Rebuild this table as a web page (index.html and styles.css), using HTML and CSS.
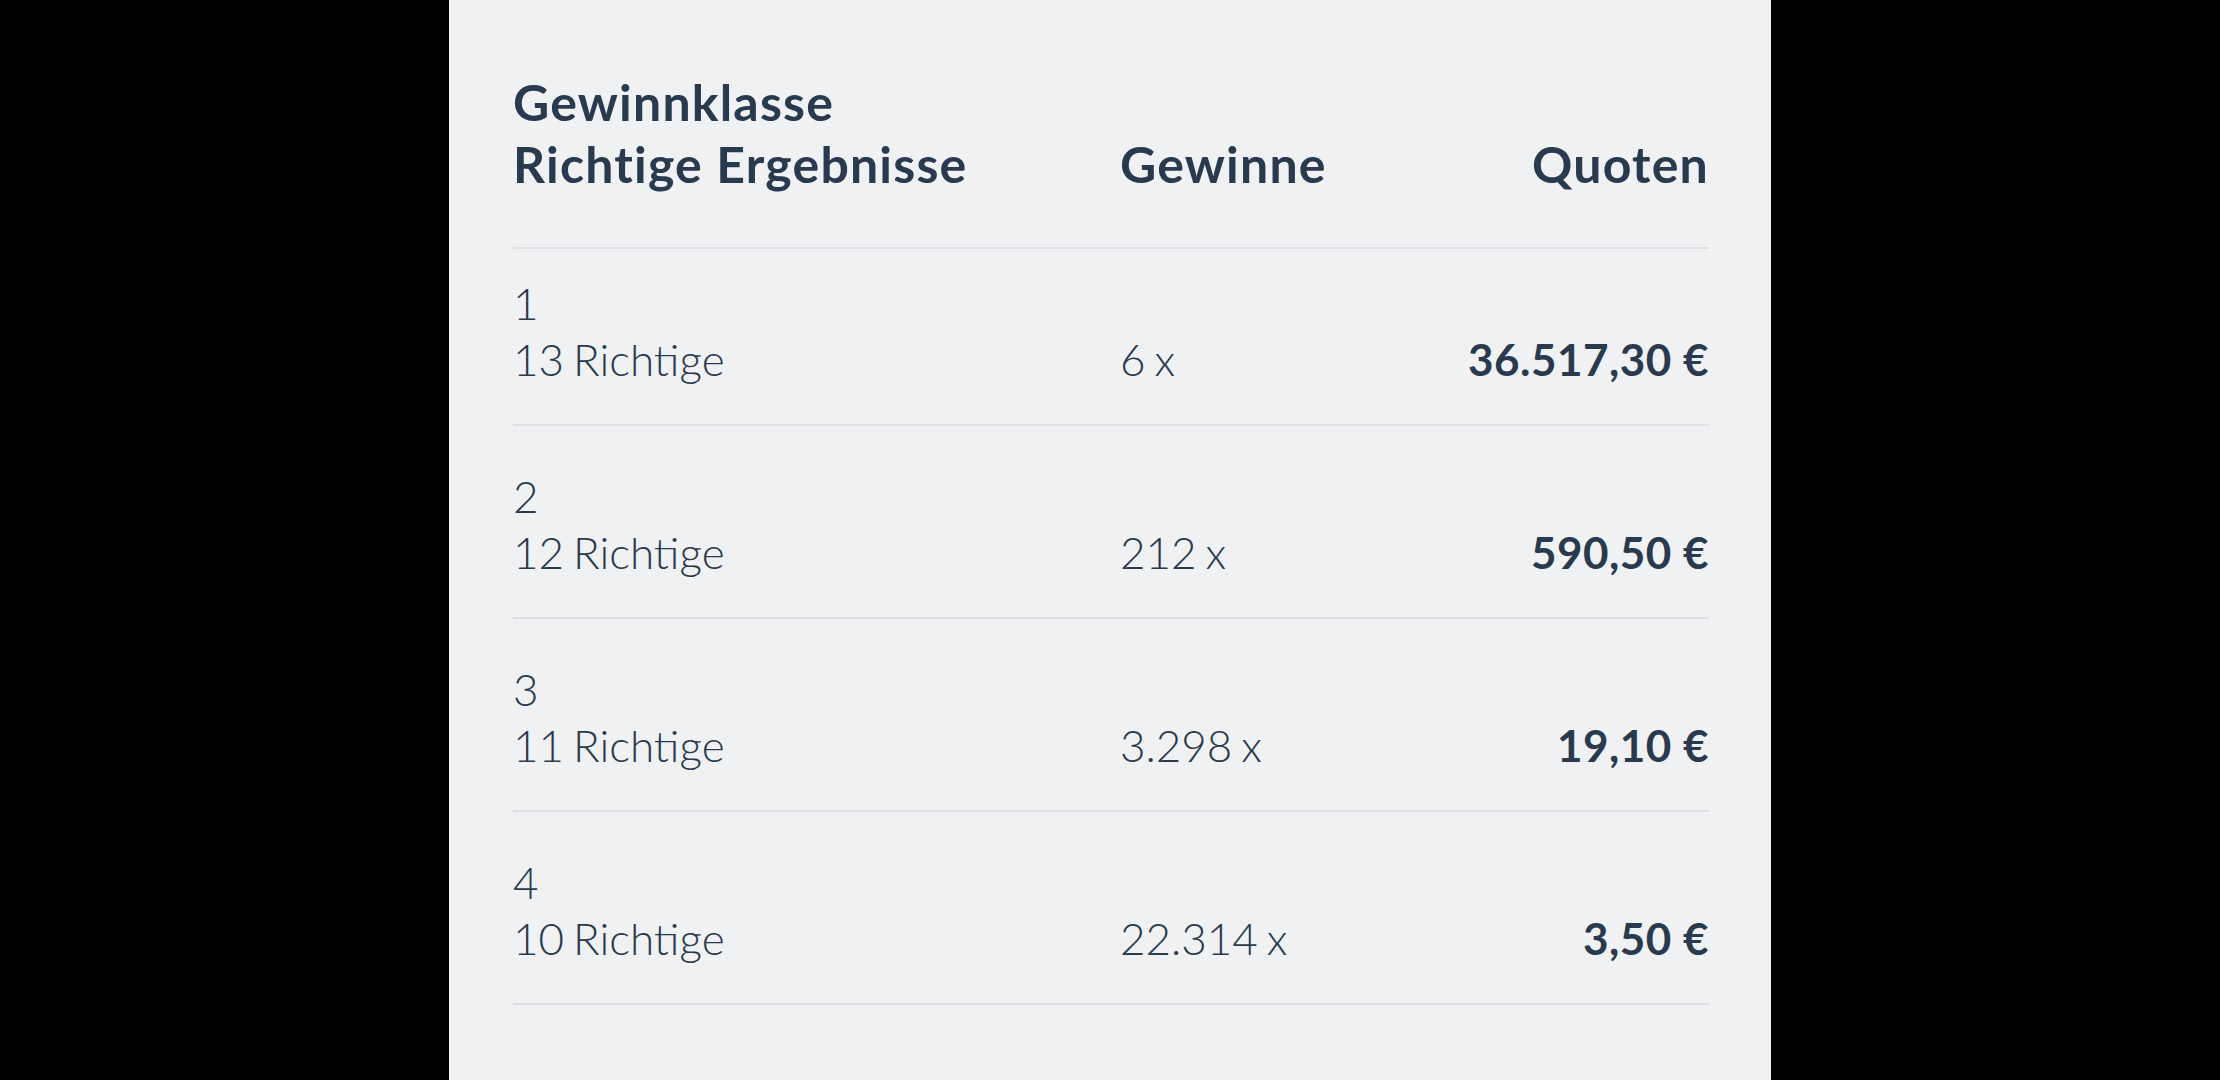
FILE: index.html
```html
<!DOCTYPE html>
<html lang="de">
<head>
<meta charset="utf-8">
<title>Quoten</title>
<link rel="stylesheet" href="styles.css">
</head>
<body>
<div class="panel">
  <div class="row head">
    <div class="col">Gewinnklasse<br>Richtige Ergebnisse</div>
    <div class="col">Gewinne</div>
    <div class="col right">Quoten</div>
  </div>
  <div class="row first">
    <div class="col">1<br>13 Richtige</div>
    <div class="col">6 x</div>
    <div class="col right sum">36.517,30 €</div>
  </div>
  <div class="row">
    <div class="col">2<br>12 Richtige</div>
    <div class="col">212 x</div>
    <div class="col right sum">590,50 €</div>
  </div>
  <div class="row">
    <div class="col">3<br>11 Richtige</div>
    <div class="col">3.298 x</div>
    <div class="col right sum">19,10 €</div>
  </div>
  <div class="row">
    <div class="col">4<br>10 Richtige</div>
    <div class="col">22.314 x</div>
    <div class="col right sum">3,50 €</div>
  </div>
</div>
</body>
</html>
```

FILE: styles.css
```css
body{
margin:0;
background:#000;
}
.panel{
width:1322px;
min-height:100vh;
margin:0 auto;
box-sizing:border-box;
padding:0 62px 0 64px;
background:#f0f1f3;
color:#293a4f;
font-family:Lato,"Noto Sans",sans-serif;
}
.row{
display:grid;
grid-template-columns:607px 1fr auto;
align-items:end;
padding:42px 0 37px;
border-bottom:2px solid #dfe0e3;
font-size:44px;
font-weight:300;
line-height:56px;
word-spacing:-3px;
}
.row.first{
padding-top:26px;
}
.head{
padding:71px 0 52px;
font-size:50px;
font-weight:700;
line-height:62px;
letter-spacing:1.2px;
word-spacing:0;
}
.right{
text-align:right;
}
.sum{
font-weight:700;
letter-spacing:0.5px;
word-spacing:0;
}
```
